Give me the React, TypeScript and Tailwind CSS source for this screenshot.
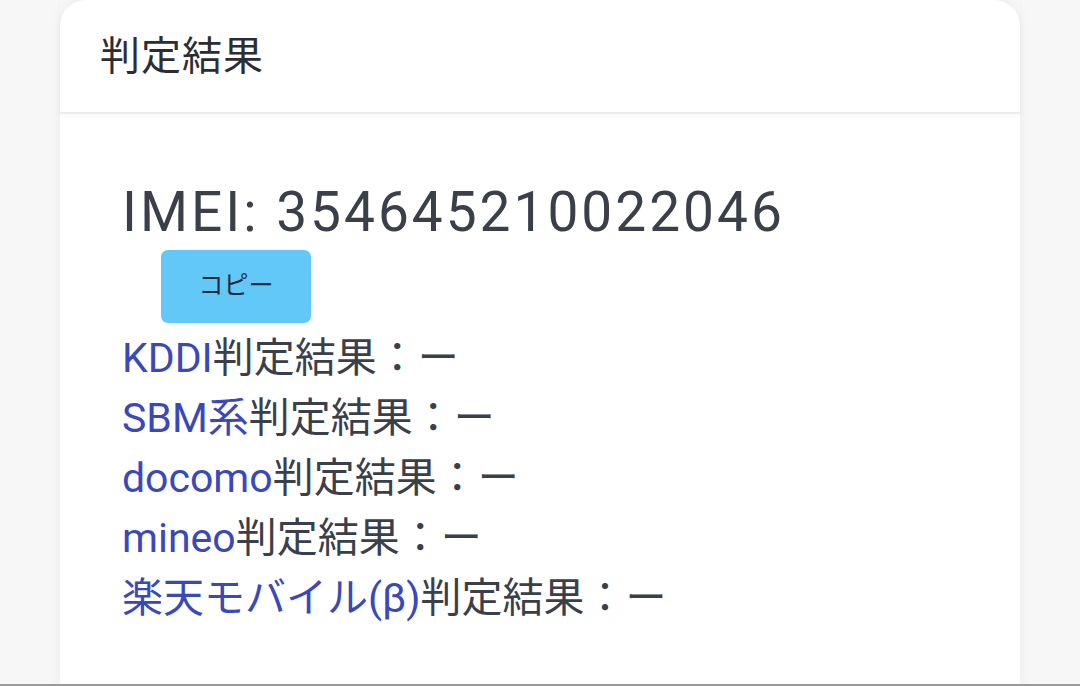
export default function App() {
  const carriers = ['KDDI', 'SBM系', 'docomo', 'mineo', '楽天モバイル(β)'];

  return (
    <div
      className="w-[1080px] h-[686px] overflow-hidden bg-[#f7f7f8] flex flex-col border-b-2 border-[#9a9a9a]"
      style={{ fontFamily: 'Roboto, "Noto Sans CJK JP", sans-serif' }}
    >
      <div className="mx-[60px] flex-1 bg-white rounded-t-[26px] shadow-[0_0_14px_rgba(0,0,0,0.06)] flex flex-col">
        <div className="h-[114px] pl-[40px] flex items-center border-b-2 border-[#ececef] shadow-[0_2px_4px_rgba(0,0,0,0.04)]">
          <h1 className="text-[40px] tracking-[1px] text-[#2b2d33] pt-[2px]">判定結果</h1>
        </div>

        <div className="pl-[62px] pt-[68px]">
          <div className="text-[55px] leading-[60px] tracking-[3px] text-[#3a3f4a]">IMEI: 354645210022046</div>
          <button className="ml-[39px] mt-[8px] w-[150px] h-[73px] rounded-[7px] bg-[#62c8f8] text-[25px] text-[#1f2a3a] pb-[2px]">
            コピー
          </button>
          <ul className="mt-[5px] text-[41px] leading-[60px]">
            {carriers.map(c => (
              <li key={c} className="text-[#3a3f4a]">
                <span className="text-[#3b48b8]">{c}</span>判定結果：ー
              </li>
            ))}
          </ul>
        </div>
      </div>
    </div>
  );
}
